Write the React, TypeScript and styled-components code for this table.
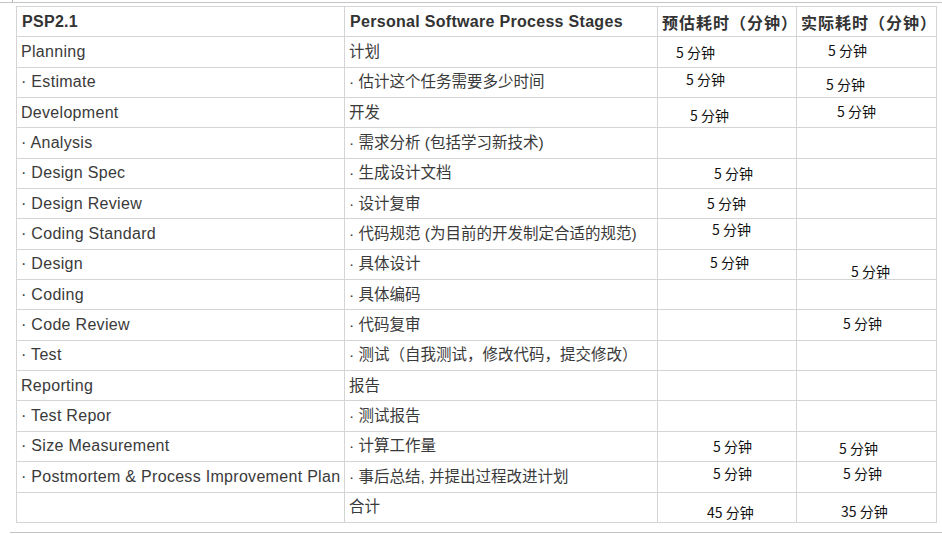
import * as React from "react";
import styled, { createGlobalStyle } from "styled-components";

const GlobalStyle = createGlobalStyle`
  html, body {
    margin: 0;
    padding: 0;
    background: #ffffff;
  }
  body {
    font-family: "Liberation Sans", Arial, "Noto Sans CJK SC", sans-serif;
    color: #333333;
  }
`;

const Page = styled.div`
  width: 942px;
  height: 534px;
  overflow: hidden;
`;

const TopRule = styled.div`
  height: 2px;
  border-bottom: 1px solid #c4c4c4;
  display: flex;
`;

const Tick = styled.span`
  width: 1px;
  height: 2px;
  margin-left: 12px;
  background: #b0b0b0;
`;

const Table = styled.table`
  border-collapse: collapse;
  table-layout: fixed;
  width: 920px;
  margin: 3px 0 0 16px;
  font-size: 16px;
  line-height: 18px;
`;

const Row = styled.tr`
  height: 30.35px;
`;

const HeadCell = styled.th<{ $cjk?: boolean }>`
  border: 1px solid #d4d4d4;
  padding: 0 0 0 ${(p) => (p.$cjk ? 4 : 5)}px;
  text-align: left;
  font-weight: bold;
  color: #333333;
  letter-spacing: ${(p) => (p.$cjk ? "1px" : "0.3px")};
  font-family: ${(p) =>
    p.$cjk
      ? `"Noto Sans CJK SC", sans-serif`
      : `"Liberation Sans", Arial, sans-serif`};
  white-space: nowrap;
`;

const Cell = styled.td<{ $spaced?: boolean }>`
  border: 1px solid #d4d4d4;
  padding: 0 0 0 4px;
  color: #3a3a3a;
  white-space: nowrap;
  vertical-align: middle;
  letter-spacing: ${(p) => (p.$spaced ? "0.3px" : "0")};
`;

const Cjk = styled.span`
  font-family: "Liberation Sans", Arial, "Noto Sans CJK SC", sans-serif;
  font-size: 15.5px;
`;

const TimeCell = styled.td`
  border: 1px solid #d4d4d4;
  padding: 0;
  vertical-align: top;
  white-space: nowrap;
`;

const TimeText = styled.span<{ $x: number; $y: number }>`
  display: block;
  padding-left: ${(p) => p.$x}px;
  padding-top: ${(p) => p.$y}px;
  font-family: "Noto Sans CJK SC", sans-serif;
  font-size: 14px;
  line-height: 16px;
  color: #111111;
`;

const BottomRule = styled.div`
  height: 0;
  margin: 9px 0 0 10px;
  border-top: 1px solid #c4c4c4;
`;

type Time = { text: string; x: number; y: number } | null;

type Item = {
  stage: string;
  cn: string;
  est: Time;
  act: Time;
};

const t = (x: number, y: number, text = "5 分钟"): Time => ({ text, x, y });

const rows: Item[] = [
  { stage: "Planning", cn: "计划", est: t(18, 7), act: t(31, 5) },
  { stage: "· Estimate", cn: "· 估计这个任务需要多少时间", est: t(28, 3), act: t(29, 8) },
  { stage: "Development", cn: "开发", est: t(32, 9), act: t(40, 5) },
  { stage: "· Analysis", cn: "· 需求分析 (包括学习新技术)", est: null, act: null },
  { stage: "· Design Spec", cn: "· 生成设计文档", est: t(56, 6), act: null },
  { stage: "· Design Review", cn: "· 设计复审", est: t(49, 6), act: null },
  { stage: "· Coding Standard", cn: "· 代码规范 (为目前的开发制定合适的规范)", est: t(54, 2), act: null },
  { stage: "· Design", cn: "· 具体设计", est: t(52, 4), act: t(54, 13) },
  { stage: "· Coding", cn: "· 具体编码", est: null, act: null },
  { stage: "· Code Review", cn: "· 代码复审", est: null, act: t(46, 5) },
  { stage: "· Test", cn: "· 测试（自我测试，修改代码，提交修改）", est: null, act: null },
  { stage: "Reporting", cn: "报告", est: null, act: null },
  { stage: "· Test Repor", cn: "· 测试报告", est: null, act: null },
  { stage: "· Size Measurement", cn: "· 计算工作量", est: t(55, 6), act: t(42, 8) },
  {
    stage: "· Postmortem & Process Improvement Plan",
    cn: "· 事后总结, 并提出过程改进计划",
    est: t(55, 3),
    act: t(46, 3),
  },
  { stage: "", cn: "合计", est: t(49, 11, "45 分钟"), act: t(44, 10, "35 分钟") },
];

function TimeValue({ value }: { value: Time }) {
  return (
    <TimeCell>
      {value && (
        <TimeText $x={value.x} $y={value.y}>
          {value.text}
        </TimeText>
      )}
    </TimeCell>
  );
}

export default function App() {
  return (
    <>
      <GlobalStyle />
      <Page>
        <TopRule>
          <Tick />
        </TopRule>
        <Table>
          <colgroup>
            <col style={{ width: 328 }} />
            <col style={{ width: 313 }} />
            <col style={{ width: 139 }} />
            <col style={{ width: 140 }} />
          </colgroup>
          <thead>
            <Row>
              <HeadCell>PSP2.1</HeadCell>
              <HeadCell>Personal Software Process Stages</HeadCell>
              <HeadCell $cjk>预估耗时（分钟）</HeadCell>
              <HeadCell $cjk>实际耗时（分钟）</HeadCell>
            </Row>
          </thead>
          <tbody>
            {rows.map((r, i) => (
              <Row key={i}>
                <Cell $spaced>{r.stage}</Cell>
                <Cell>
                  <Cjk>{r.cn}</Cjk>
                </Cell>
                <TimeValue value={r.est} />
                <TimeValue value={r.act} />
              </Row>
            ))}
          </tbody>
        </Table>
        <BottomRule />
      </Page>
    </>
  );
}
